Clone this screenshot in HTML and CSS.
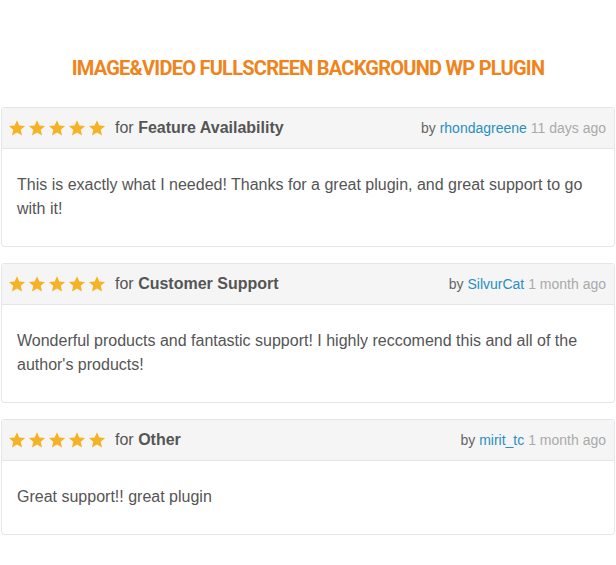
FILE: index.html
```html
<!DOCTYPE html>
<html>
<head>
<meta charset="utf-8">
<link rel="stylesheet" href="styles.css">
</head>
<body>
<svg width="0" height="0" class="defs">
  <defs>
    <symbol id="star" viewBox="0 0 24 24">
      <path d="M12 1.5l3.1 7.1 7.7.7-5.8 5.1 1.7 7.6L12 18l-6.7 4 1.7-7.6-5.8-5.1 7.7-.7z"/>
    </symbol>
  </defs>
</svg>
<h1 class="title">IMAGE&amp;VIDEO FULLSCREEN BACKGROUND WP PLUGIN</h1>
<div class="reviews">
  <div class="card">
    <div class="head">
      <div class="left">
        <span class="stars"><svg><use href="#star"/></svg><svg><use href="#star"/></svg><svg><use href="#star"/></svg><svg><use href="#star"/></svg><svg><use href="#star"/></svg></span>
        <span class="for">for <b>Feature Availability</b></span>
      </div>
      <div class="meta">by <a class="user">rhondagreene</a> <span class="time">11 days ago</span></div>
    </div>
    <div class="body">This is exactly what I needed! Thanks for a great plugin, and great support to go with it!</div>
  </div>
  <div class="card">
    <div class="head">
      <div class="left">
        <span class="stars"><svg><use href="#star"/></svg><svg><use href="#star"/></svg><svg><use href="#star"/></svg><svg><use href="#star"/></svg><svg><use href="#star"/></svg></span>
        <span class="for">for <b>Customer Support</b></span>
      </div>
      <div class="meta">by <a class="user">SilvurCat</a> <span class="time">1 month ago</span></div>
    </div>
    <div class="body">Wonderful products and fantastic support! I highly reccomend this and all of the author's products!</div>
  </div>
  <div class="card">
    <div class="head">
      <div class="left">
        <span class="stars"><svg><use href="#star"/></svg><svg><use href="#star"/></svg><svg><use href="#star"/></svg><svg><use href="#star"/></svg><svg><use href="#star"/></svg></span>
        <span class="for">for <b>Other</b></span>
      </div>
      <div class="meta">by <a class="user">mirit_tc</a> <span class="time">1 month ago</span></div>
    </div>
    <div class="body">Great support!! great plugin</div>
  </div>
</div>
</body>
</html>
```
FILE: styles.css
```css
html, body {
  margin: 0;
  padding: 0;
  background: #fff;
}
body {
  font-family: "Liberation Sans", Arial, sans-serif;
  color: #555;
}
.defs {
  position: absolute;
  width: 0;
  height: 0;
}
.title {
  margin: 0;
  padding-top: 56px;
  height: 51px;
  text-align: center;
  font-family: "Roboto", "Liberation Sans", sans-serif;
  font-weight: 700;
  font-size: 20px;
  line-height: 24px;
  color: #f0841c;
  letter-spacing: -0.75px;
}
.reviews {
  display: flex;
  flex-direction: column;
  gap: 16px;
  margin: 0 1px;
}
.card {
  border: 1px solid #e4e6e8;
  border-radius: 3px;
  overflow: hidden;
}
.head {
  height: 40px;
  background: #f5f5f5;
  border-bottom: 1px solid #e4e6e8;
  display: flex;
  align-items: center;
  justify-content: space-between;
  padding: 0 8px 0 6px;
}
.left {
  display: flex;
  align-items: center;
}
.stars {
  display: flex;
  gap: 2px;
  margin-right: 9px;
}
.stars svg {
  width: 18px;
  height: 18px;
  fill: #f5b224;
}
.for {
  font-size: 16px;
  color: #555;
}
.for b {
  color: #555;
}
.meta {
  font-size: 14px;
  color: #666;
}
.user {
  color: #2a8fbd;
}
.time {
  color: #aaa;
}
.body {
  padding: 24px 15px 25px;
  font-size: 16px;
  line-height: 24px;
  color: #555;
}
```
